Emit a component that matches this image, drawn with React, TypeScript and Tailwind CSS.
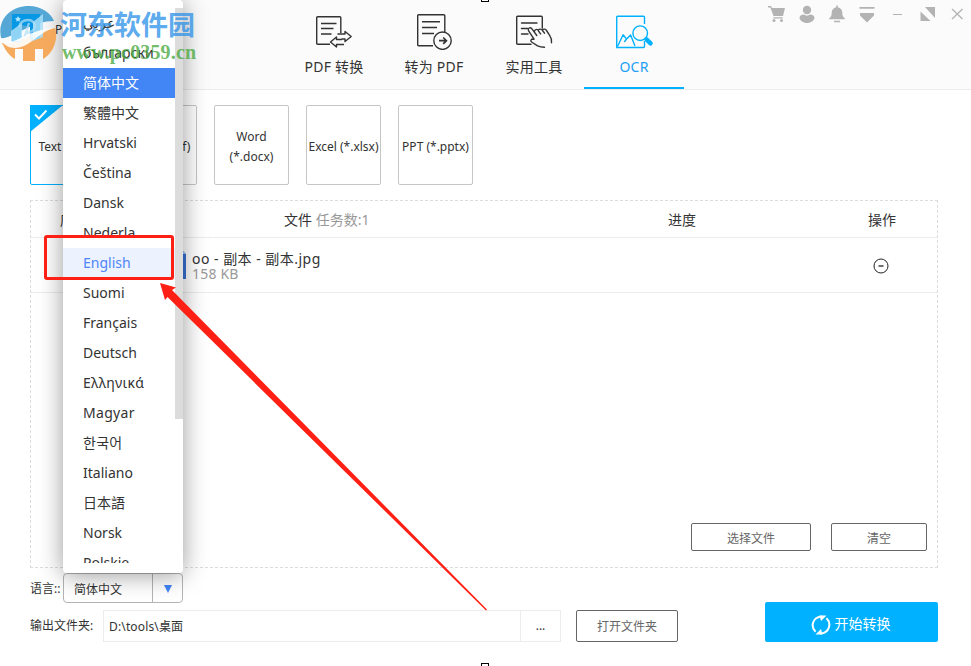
import React, { useState } from 'react';
import clsx from 'clsx';

const languages = [
  'عربي',
  'български',
  '简体中文',
  '繁體中文',
  'Hrvatski',
  'Čeština',
  'Dansk',
  'Nederla',
  'English',
  'Suomi',
  'Français',
  'Deutsch',
  'Ελληνικά',
  'Magyar',
  '한국어',
  'Italiano',
  '日本語',
  'Norsk',
  'Polskie',
];

const formats = [
  { id: 'txt', label: 'Text (*.txt)' },
  { id: 'pdf', label: 'PDF (*.pdf)' },
  { id: 'docx', label: 'Word (*.docx)' },
  { id: 'xlsx', label: 'Excel (*.xlsx)' },
  { id: 'pptx', label: 'PPT (*.pptx)' },
];

const ConvertIcon = () => (
  <svg width="38" height="36" viewBox="0 0 38 36" fill="none" stroke="#333" strokeWidth="1.4">
    <path d="M14 32.3H1.700Q.7 32.300.7 31.300V5.700Q.7 4.700 1.700 4.700H23.800Q24.800 4.700 24.800 5.700V21" />
    <path d="M5 11.500h15.500M5 16.500h12.500M5 22h10.500" />
    <path d="M21.500 22h7.500v-2.500l6.200 5-6.200 5V27h-3.500M28 32.500h-7.500V35L14.500 30l6-5v2.500h5.500" strokeLinejoin="round" />
  </svg>
);

const ToPdfIcon = () => (
  <svg width="38" height="38" viewBox="0 0 38 38" fill="none" stroke="#333" strokeWidth="1.4">
    <path d="M17 33.7H2.700Q1.700 33.700 1.700 32.700V3.700Q1.700 2.700 2.700 2.700H27.800Q28.800 2.700 28.800 3.700V21" />
    <path d="M6 9.700h18M6 15.500h15M6 21.500h12" />
    <circle cx="26.500" cy="28.700" r="8.700" fill="#fbfbfb" />
    <path d="M23 28.700h7M27.200 25.500l3.200 3.200-3.200 3.200" strokeWidth="1.7" />
  </svg>
);

const ToolsIcon = () => (
  <svg width="38" height="36" viewBox="0 0 38 36" fill="none" stroke="#333" strokeWidth="1.4" strokeLinecap="round">
    <path d="M15 32.2H1.700Q.7 32.200.7 31.200V5.200Q.7 4.200 1.700 4.200H25.300Q26.300 4.200 26.300 5.200V16" />
    <path d="M5.500 11h15.500M5.500 16.500h6M5.500 22h6.500" />
    <path d="M18 27.200 12.500 18.700c-1-2.500 1.500-4 3.300-2l5 6.800M18.300 19.500c1-3 3.600-2.500 4.300-.3l2 2.700M22.300 18.200c1-1.700 3.300-1.300 4.200.3l2 2.700M26.300 17.900c1.500-1.500 3.300-.7 4.200.6l3 4.600Q36 26.700 35.500 30.700M18 27.200h-2.300q-2 1.800.6 3.300l5.300 3.300Q24.500 35.200 28.500 35.200" />
  </svg>
);

const OcrIcon = () => (
  <svg width="38" height="38" viewBox="0 0 38 38" fill="none" stroke="#00b1ff" strokeWidth="1.4">
    <path d="M28.500 12V5.200Q28.500 4.200 27.500 4.200H1.700Q.7 4.200.7 5.200V35.500H27.500Q28.500 35.500 28.500 34.500V29" />
    <path d="M1.500 34.500 7.100 22.800l3.500 4.300 4-4.200 4.400 11M10.500 27l-2.200 3" strokeLinejoin="round" />
    <circle cx="24.200" cy="21.200" r="7.300" fill="#fbfbfb" />
    <path d="m30.500 27.300 4 4" strokeWidth="4.500" strokeLinecap="round" />
  </svg>
);

const tabs = [
  { id: 'convert', label: 'PDF 转换', icon: <ConvertIcon /> },
  { id: 'toPdf', label: '转为 PDF', icon: <ToPdfIcon /> },
  { id: 'tools', label: '实用工具', icon: <ToolsIcon /> },
  { id: 'ocr', label: 'OCR', icon: <OcrIcon /> },
];

const WindowControls = () => (
  <div className="flex h-7 items-center gap-[10px] text-[#b3b3b3]">
    <svg width="20" height="18" viewBox="0 0 20 18" fill="currentColor">
      <path d="M1 1h3l1 2h13l-2 8H6.500L3.400 2.500H1zM6.300 12.200h9.500v1.300H6.300z" />
      <circle cx="7" cy="15.500" r="1.500" />
      <circle cx="14.500" cy="15.500" r="1.500" />
    </svg>
    <svg width="20" height="18" viewBox="0 0 20 18" fill="currentColor">
      <circle cx="10" cy="5" r="4.200" />
      <path d="M2.500 13.300C2.500 10.500 5 9.500 7 9.500q3 2.300 6 0c2 0 4.500 1 4.500 3.800C16.500 16.500 13 18 10 18s-6.500-1.500-7.500-4.700z" />
    </svg>
    <svg width="20" height="18" viewBox="0 0 20 18" fill="currentColor">
      <path d="M9.200.5h1.600v1.700c3 .5 4.500 2.800 4.500 5.500 0 3 .8 4.300 2.500 5.500v1H2.200v-1c1.700-1.200 2.500-2.500 2.500-5.500 0-2.700 1.500-5 4.500-5.500zM7 15.800h6v1.500H7z" />
    </svg>
    <svg width="20" height="18" viewBox="0 0 20 18" fill="currentColor">
      <path d="M2.500 2h15v1.700h-15zM3 8h14v2.500l-7 7-7-7z" />
    </svg>
    <svg width="20" height="18" viewBox="0 0 20 18" fill="currentColor">
      <path d="M6 9h9v1H6z" />
    </svg>
    <svg width="20" height="18" viewBox="0 0 20 18" fill="currentColor">
      <path d="M8 2h10v11zM3.500 6.500 13.500 16h-10z" />
    </svg>
    <svg width="20" height="18" viewBox="0 0 20 18" fill="none" stroke="currentColor" strokeWidth="1.300">
      <path d="m5 4 10.500 10M15.500 4 5 14" />
    </svg>
  </div>
);

const Header = () => (
  <header className="flex h-[90px] border-b border-[#ececec] bg-[#fbfbfb]">
    <div className="w-[284px] pt-[22px] pl-[55px] text-xs">PDF</div>
    <nav className="flex">
      {tabs.map((tab) => (
        <button
          key={tab.id}
          className={clsx(
            'flex w-[100px] flex-col items-center border-b-2 text-sm',
            tab.id === 'ocr' ? 'border-[#00b1ff] text-[#1ea0f5]' : 'border-transparent'
          )}
        >
          <span className="flex h-[56px] items-start pt-3 pl-[2px]">{tab.icon}</span>
          <span className="leading-[22px] tracking-[0.2px] whitespace-nowrap">{tab.label}</span>
        </button>
      ))}
    </nav>
    <div className="ml-auto pr-1">
      <WindowControls />
    </div>
  </header>
);

const LanguageMenu = ({ selected, onSelect }: { selected: string; onSelect: (lang: string) => void }) => (
  <div className="absolute bottom-full left-0 z-10 flex h-[573px] w-[120px] rounded bg-white pt-2 pb-[10px] shadow-[0_2px_24px_rgba(0,0,0,0.4)]">
    <ul className="w-[112px] overflow-hidden">
      {languages.map((lang) => (
        <li
          key={lang}
          onClick={() => onSelect(lang)}
          className={clsx(
            'h-[30px] pl-5 text-left text-sm leading-[30px] whitespace-nowrap',
            lang === selected && 'bg-[#4285f4] text-white',
            lang === 'English' && 'bg-[#ecf2fe] text-[#4f86f7]',
            (lang === 'Ελληνικά' || lang === 'Magyar' || lang === '한국어') && 'tracking-[0.3px]'
          )}
        >
          {lang}
        </li>
      ))}
    </ul>
    <div className="h-[411px] w-2 bg-[#dcdcdc]" />
  </div>
);

const Watermark = () => (
  <div className="pointer-events-none absolute top-0 left-0 z-20 flex h-[66px] w-[200px]">
    <svg className="shrink-0" width="60" height="66" viewBox="0 0 60 66">
      <path d="M1 38C-3 19 11 6 29 6c12 0 22 7 25 15-9 0-20 3-31 9-10 5-18 9-22 8z" fill="#3d9bd0" opacity=".88" />
      <path d="M2 43c15 3 24-10 53-15 4 13-3 26-12 31V49h-8v12H23V49h-8v10C8 55 5 49 2 43z" fill="#f4a14c" opacity=".9" />
      <path d="M12 24V14h28v24l-10 3V27l-9-2v17h-9z" fill="#0798e5" />
      <path d="M11 31l11-8v18H11zM33 22l10-8v23L33 41z" fill="#a8def8" opacity=".85" />
      <path d="M25 33c12 0 13-13 3-13-5 0-8 3-9 7M24 39l5-16" stroke="#b4e0f5" strokeWidth="2.500" fill="none" opacity=".7" />
      <path d="M2 42c14 3 25-12 52-14-15 4-25 20-39 20-6 0-10-3-13-6z" fill="#fff" opacity=".9" />
      <path d="m18 16 1 2 2 .3-1.500 1.500.3 2-1.800-1-1.800 1 .3-2-1.500-1.500 2-.3z" fill="#b4e7ff" />
    </svg>
    <div className="pt-[9px]">
      <div className="font-['Liberation_Serif','Noto_Sans_CJK_SC',serif] text-[27px] leading-[34px] font-bold whitespace-nowrap text-[#3294e9]/80">
        河东软件园
      </div>
      <div className="pl-[2px] font-['Liberation_Serif',serif] text-[20px] leading-[18px] font-bold tracking-[0.15px] whitespace-nowrap text-[#4caa42]/80">
        www.pc0359.cn
      </div>
    </div>
  </div>
);

export default function App() {
  const [format, setFormat] = useState('txt');
  const [language, setLanguage] = useState('简体中文');

  return (
    <div className="relative h-[666px] w-[971px] overflow-hidden bg-white font-['Noto_Sans','Noto_Sans_CJK_SC','Noto_Sans_CJK_KR',sans-serif] text-[#333]">
      <Header />

      <main className="px-[30px] pt-[15px]">
        {/* Output formats */}
        <div className="flex gap-[17px]">
          {formats.map((f) => (
            <button
              key={f.id}
              onClick={() => setFormat(f.id)}
              className={clsx(
                'relative flex h-20 w-[75px] items-center justify-center rounded-[2px] border pt-1 text-xs leading-5',
                f.id === format ? 'border-[#00b1ff]' : 'border-[#c6c6c6]',
                f.id !== 'docx' && 'whitespace-nowrap'
              )}
            >
              {f.id === format && (
                <svg className="absolute -top-px -left-px" width="33" height="28" viewBox="0 0 33 28">
                  <path d="M0 0h33L0 27z" fill="#00b1ff" />
                  <path d="m5 9.500 4 4 7.500-8" stroke="#fff" strokeWidth="2" fill="none" />
                </svg>
              )}
              {f.label}
            </button>
          ))}
        </div>

        {/* File list */}
        <section className="mt-[15px] flex h-[368px] w-[908px] flex-col border border-dashed border-[#dcdcdc]">
          <div className="flex h-[37px] items-center border-b border-[#ececec] pt-[2px] text-sm">
            <span className="w-[253px] pl-[29px]">序号</span>
            <span className="w-[384px]">
              文件 <span className="text-[#999]">任务数:1</span>
            </span>
            <span className="w-[200px]">进度</span>
            <span>操作</span>
          </div>
          <div className="flex h-[55px] items-center border-b border-[#ececec]">
            <svg className="ml-[131px]" width="24" height="28" viewBox="0 0 24 28">
              <path d="M0 0h21l3 3v25H0z" fill="#3973d6" />
              <path d="M21 0v3h3z" fill="#a9c7f7" />
            </svg>
            <div className="ml-[6px] w-[681px] pt-[2px] text-sm leading-[15px]">
              <div className="tracking-[0.48px]">oo - 副本 - 副本.jpg</div>
              <div className="tracking-[0.2px] text-[#999]">158 KB</div>
            </div>
            <svg className="mt-px" width="16" height="16" viewBox="0 0 16 16" fill="none" stroke="#222">
              <circle cx="8" cy="8" r="7" />
              <path d="M5.500 8h5" strokeWidth="1.300" />
            </svg>
          </div>
          <div className="mt-auto flex justify-end gap-5 pr-[10px] pb-4 text-xs text-[#666]">
            <button className="h-7 w-[120px] rounded-[2px] border border-[#666] pt-[3px]">选择文件</button>
            <button className="h-7 w-24 rounded-[2px] border border-[#666] pt-[3px]">清空</button>
          </div>
        </section>

        {/* Language and output folder */}
        <div className="flex justify-between">
          <div>
            <div className="mt-[5px] flex h-[30px] items-center text-xs">
              <span className="w-[33px] pt-px whitespace-nowrap">语言::</span>
              <div className="relative flex h-[30px] w-[120px] items-center rounded border border-[#b4b4b4]">
                <span className="w-[88px] pt-[3px] pl-[10px]">{language}</span>
                <span className="flex h-full flex-1 items-center justify-center border-l border-[#b4b4b4] pt-px">
                  <svg width="8" height="8" viewBox="0 0 8 8">
                    <path d="M0 0h8L4 8z" fill="#4285f4" />
                  </svg>
                </span>
              </div>
            </div>
            <div className="mt-[7px] flex h-8 items-center text-xs">
              <span className="w-[73px]">输出文件夹:</span>
              <div className="flex h-8 w-[458px] items-center border border-[#ececec]">
                <span className="w-[416px] pt-px pl-[5px] tracking-[0.15px]">D:\tools\桌面</span>
                <span className="flex h-full flex-1 items-center justify-center border-l border-[#ececec]">...</span>
              </div>
              <button className="ml-[15px] h-8 w-[102px] rounded-[2px] border border-[#666] pt-[2px] text-[#666]">
                打开文件夹
              </button>
            </div>
          </div>
          <button className="mt-[34px] mr-[3px] flex h-10 w-[173px] items-center justify-center gap-1 rounded-[2px] bg-[#00b1ff] pt-[3px] pr-[2px] text-sm text-white">
            <svg className="mt-[2px]" width="20" height="20" viewBox="0 0 20 20" fill="none" stroke="#fff" strokeWidth="2">
              <path d="M4.500 16.800C-.5 12 1 2 11 1.500M15.500 3.200C20.500 8 19 18 9 18.500" />
              <path d="M8.500.5h7L10 6zM11.500 19.500h-7L10 14z" fill="#fff" stroke="none" />
            </svg>
            开始转换
          </button>
        </div>
      </main>

      {/* Open language list, floating above the form */}
      <div className="absolute top-[573px] left-[63px]">
        <LanguageMenu selected={language} onSelect={setLanguage} />
      </div>

      <Watermark />

      {/* Annotations */}
      <div className="pointer-events-none absolute top-[235px] left-[44px] z-20 h-[45px] w-[130px] rounded-[3px] border-3 border-[#ff2015]" />
      <svg className="pointer-events-none absolute top-[280px] left-[155px] z-20" width="340" height="336" viewBox="155 280 340 336">
        <path d="M160 283l16 4.500-4 2.500L487 609.500l-1 1L167.500 297l-2.500 3z" fill="#ff2015" />
      </svg>
      <div className="absolute top-[-6px] left-[481px] h-2 w-2 border border-black bg-white" />
      <div className="absolute top-[663px] left-[481px] h-2 w-2 border border-black bg-white" />
    </div>
  );
}
